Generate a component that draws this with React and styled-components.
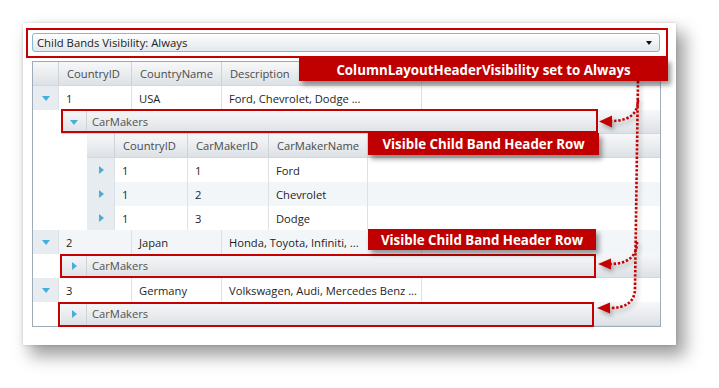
import React from "react";
import styled, { createGlobalStyle } from "styled-components";

const Global = createGlobalStyle`
  html, body { margin: 0; padding: 0; background: #ffffff; }
  body { font-family: "Open Sans", "Liberation Sans", sans-serif; }
  * { box-sizing: border-box; }
`;

const Page = styled.div`
  position: relative;
  width: 719px;
  height: 388px;
  padding: 23px 43px 43px 23px;
  overflow: hidden;
`;

const Card = styled.div`
  width: 653px;
  height: 322px;
  background: #ffffff;
  padding: 5px 0 0 3px;
  box-shadow: 0 0 3px rgba(0, 0, 0, 0.18), 8px 10px 16px 1px rgba(0, 0, 0, 0.38);
`;

const ComboFrame = styled.div`
  width: 642px;
  height: 30px;
  border: 2px solid #c40000;
  padding: 3px 0 0 4px;
`;

const Combo = styled.div`
  width: 628px;
  height: 19px;
  border: 1px solid #86b8cf;
  border-radius: 3px;
  background: linear-gradient(#ffffff, #eef1f4 55%, #e3e8ec);
  display: flex;
  align-items: center;
  justify-content: space-between;
  padding: 0 7px 0 4px;
  font-size: 11.3px;
  color: #222;
`;

const ComboArrow = styled.span`
  width: 0;
  height: 0;
  border-left: 3.5px solid transparent;
  border-right: 3.5px solid transparent;
  border-top: 4px solid #111;
`;

const Grid = styled.div`
  margin: 3px 0 0 6px;
  width: 629px;
  border: 1px solid #9fabb7;
  background: #ffffff;
  font-size: 11.2px;
`;

const Row = styled.div`
  display: flex;
  height: 24px;
  background: ${(p) => (p.$alt ? "#f2f6f9" : "#ffffff")};
`;

const Indent = styled.div`
  width: ${(p) => p.$w}px;
  flex: none;
  background: #ffffff;
`;

const Strip = styled.div`
  flex: 1;
  display: flex;
  background: linear-gradient(#f6f7f8, #e9ecef 55%, #dce1e5);
  border-bottom: 1px solid #d3d8dd;
`;

const Cell = styled.div`
  width: ${(p) => (p.$w ? `${p.$w}px` : "auto")};
  flex: ${(p) => (p.$w ? "none" : "1")};
  display: flex;
  align-items: center;
  padding-left: 7px;
  border-right: ${(p) => (p.$w ? "1px solid #dce1e5" : "none")};
  color: #1e1e1e;
  white-space: nowrap;
  overflow: hidden;
`;

const HeadCell = styled(Cell)`
  padding-left: 8px;
  color: #4a4a4a;
  border-right: ${(p) => (p.$w ? "1px solid #cdd3d9" : "none")};
`;

const Indicator = styled.div`
  width: ${(p) => p.$w}px;
  flex: none;
  display: flex;
  align-items: center;
  justify-content: center;
  background: ${(p) => (p.$plain ? "transparent" : "#e7ecf0")};
  border-right: 1px solid ${(p) => (p.$plain ? "#cdd3d9" : "#dce1e5")};
`;

const Tri = styled.span`
  width: 0;
  height: 0;
  ${(p) =>
    p.$down
      ? `border-left: 4px solid transparent; border-right: 4px solid transparent; border-top: 5px solid #47aedb; margin-top: 1px;`
      : `border-top: 4px solid transparent; border-bottom: 4px solid transparent; border-left: 5px solid #47aedb; margin-left: 1px;`}
`;

const BandLabel = styled.div`
  flex: 1;
  display: flex;
  align-items: center;
  padding-left: 5px;
  color: #505050;
`;

const Outline = styled.div`
  position: absolute;
  left: ${(p) => p.$x}px;
  top: ${(p) => p.$y}px;
  width: ${(p) => p.$w}px;
  height: ${(p) => p.$h}px;
  border: 2px solid #c40000;
  pointer-events: none;
`;

const Callout = styled.div`
  position: absolute;
  left: ${(p) => p.$x}px;
  top: ${(p) => p.$y}px;
  width: ${(p) => p.$w}px;
  height: ${(p) => p.$h}px;
  background: #c00000;
  color: #ffffff;
  font-weight: 700;
  font-size: 13.3px;
  display: flex;
  align-items: center;
  justify-content: center;
  box-shadow: 3px 4px 5px rgba(0, 0, 0, 0.4);
  white-space: nowrap;
`;

const Overlay = styled.svg`
  position: absolute;
  left: 0;
  top: 0;
  pointer-events: none;
  filter: drop-shadow(2px 3px 2px rgba(0, 0, 0, 0.3));
`;

const mainCols = [
  { w: 73, label: "CountryID" },
  { w: 90, label: "CountryName" },
  { w: 200, label: "Description" },
];
const childCols = [
  { w: 73, label: "CountryID" },
  { w: 81, label: "CarMakerID" },
  { w: 99, label: "CarMakerName" },
];

function DataRow({ indent = 0, ind, cols, values, alt, down }) {
  return (
    <Row $alt={alt}>
      {indent > 0 && <Indent $w={indent} />}
      <Indicator $w={ind}>
        <Tri $down={down} />
      </Indicator>
      {cols.map((c, i) => (
        <Cell key={i} $w={c.w}>
          {values[i]}
        </Cell>
      ))}
      <Cell />
    </Row>
  );
}

function HeaderRow({ indent = 0, ind, cols }) {
  return (
    <Row>
      {indent > 0 && <Indent $w={indent} />}
      <Strip>
        <Indicator $w={ind} $plain />
        {cols.map((c, i) => (
          <HeadCell key={i} $w={c.w}>
            {c.label}
          </HeadCell>
        ))}
        <HeadCell />
      </Strip>
    </Row>
  );
}

function BandRow({ expanded }) {
  return (
    <Row>
      <Indent $w={28} />
      <Strip>
        <Indicator $w={26} $plain>
          <Tri $down={expanded} />
        </Indicator>
        <BandLabel>CarMakers</BandLabel>
      </Strip>
    </Row>
  );
}

export default function App() {
  return (
    <>
      <Global />
      <Page>
        <Card>
          <ComboFrame>
            <Combo>
              <span>Child Bands Visibility: Always</span>
              <ComboArrow />
            </Combo>
          </ComboFrame>
          <Grid>
            <HeaderRow ind={26} cols={mainCols} />
            <DataRow ind={26} cols={mainCols} values={["1", "USA", "Ford, Chevrolet, Dodge ..."]} down />
            <BandRow expanded />
            <HeaderRow indent={54} ind={28} cols={childCols} />
            <DataRow indent={54} ind={28} cols={childCols} values={["1", "1", "Ford"]} />
            <DataRow indent={54} ind={28} cols={childCols} values={["1", "2", "Chevrolet"]} alt />
            <DataRow indent={54} ind={28} cols={childCols} values={["1", "3", "Dodge"]} />
            <DataRow ind={26} cols={mainCols} values={["2", "Japan", "Honda, Toyota, Infiniti, ..."]} alt down />
            <BandRow />
            <DataRow ind={26} cols={mainCols} values={["3", "Germany", "Volkswagen, Audi, Mercedes Benz ..."]} down />
            <BandRow />
          </Grid>
        </Card>

        <Outline $x={61} $y={109} $w={537} $h={24} />
        <Outline $x={60} $y={254} $w={536} $h={24} />
        <Outline $x={58} $y={302} $w={536} $h={25} />

        <Overlay width="719" height="388" viewBox="0 0 719 388">
          <g fill="none" stroke="#c40000" strokeWidth="2.6" strokeDasharray="2.4 1.8">
            <path d="M638 81 L635 288 C635 302 626 308 610 308" />
            <path d="M638 100 C638 114 629 121 611 121" />
            <path d="M637 242 C637 256 628 264 610 264" />
          </g>
          <g fill="#c40000">
            <polygon points="599,121.5 612,115.5 612,127.5" />
            <polygon points="598,264 611,258.5 611,269.5" />
            <polygon points="597,308 610,302.5 610,313.5" />
          </g>
        </Overlay>

        <Callout $x={299} $y={58} $w={369} $h={23}>
          ColumnLayoutHeaderVisibility set to Always
        </Callout>
        <Callout $x={368} $y={133} $w={231} $h={22}>
          Visible Child Band Header Row
        </Callout>
        <Callout $x={368} $y={229} $w={228} $h={21}>
          Visible Child Band Header Row
        </Callout>
      </Page>
    </>
  );
}
